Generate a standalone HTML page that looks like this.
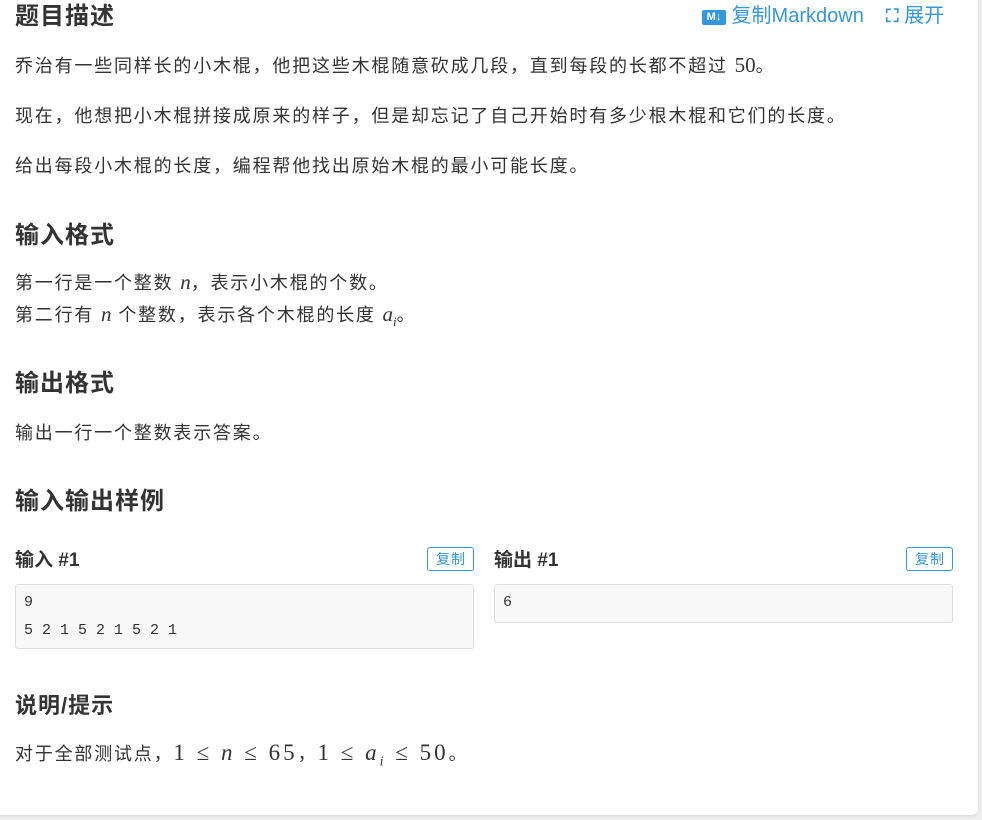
<!DOCTYPE html>
<html><head><meta charset="utf-8"><style>
body{margin:0;width:982px;height:820px;background:#efefef;overflow:hidden;font-family:"Liberation Sans","Noto Sans CJK SC",sans-serif;color:#333}
.card{position:absolute;left:-10px;top:-10px;width:988px;height:825px;background:#fff;border-radius:6px;box-shadow:0 1px 3px rgba(0,0,0,.1)}
h2{position:absolute;margin:0;font-size:24px;letter-spacing:1px;font-weight:bold;left:15px;line-height:30px;color:#333}
p{position:absolute;margin:0;left:15px;font-size:18px;letter-spacing:1.8px;line-height:24px;white-space:nowrap}
.m{font-family:"Liberation Serif",serif;font-size:21px;letter-spacing:0}
.i{font-style:italic}
h3{position:absolute;margin:0;font-size:19px;font-weight:bold;line-height:24px}
.btn{position:absolute;border:1px solid #3498db;color:#3498db;border-radius:3px;font-size:14px;line-height:22px;padding:0 7px 0 8px;background:#fff;letter-spacing:1px}
.box{position:absolute;background:#f8f8f8;border:1px solid #ddd;border-radius:3px;font-family:"Liberation Mono","DejaVu Sans Mono",monospace;font-size:15px;line-height:28px;padding:4px 8px;box-sizing:border-box}
.lk{position:absolute;color:#3498db;font-size:20px;line-height:24px;top:4px;white-space:nowrap}
</style></head><body>
<div class="card"></div>
<h2 style="top:2px">题目描述</h2>
<div class="lk" style="left:702px"><span style="display:inline-block;width:24px;height:15px;background:#3498db;border-radius:2px;color:#fff;font-size:11px;line-height:15px;text-align:center;vertical-align:2px;font-weight:bold">M↓</span> 复制Markdown</div>
<div class="lk" style="left:886px"><span style="font-weight:bold;font-size:18px">⛶</span> 展开</div>
<p style="top:53px">乔治有一些同样长的小木棍，他把这些木棍随意砍成几段，直到每段的长都不超过 <span class="m">50</span>。</p>
<p style="top:104px">现在，他想把小木棍拼接成原来的样子，但是却忘记了自己开始时有多少根木棍和它们的长度。</p>
<p style="top:154px">给出每段小木棍的长度，编程帮他找出原始木棍的最小可能长度。</p>
<h2 style="top:221px">输入格式</h2>
<p style="top:270px">第一行是一个整数 <span class="m i">n</span>，表示小木棍的个数。</p>
<p style="top:302px">第二行有 <span class="m i">n</span> 个整数，表示各个木棍的长度 <span class="m i">a<sub style="font-size:13px">i</sub></span>。</p>
<h2 style="top:369px">输出格式</h2>
<p style="top:421px">输出一行一个整数表示答案。</p>
<h2 style="top:487px">输入输出样例</h2>
<h3 style="left:15px;top:549px">输入 #1</h3>
<div class="btn" style="left:427px;top:547px">复制</div>
<div class="box" style="left:15px;top:584px;width:459px;height:65px">9<br>5 2 1 5 2 1 5 2 1</div>
<h3 style="left:494px;top:549px">输出 #1</h3>
<div class="btn" style="left:906px;top:547px">复制</div>
<div class="box" style="left:494px;top:584px;width:459px;height:39px">6</div>
<h2 style="top:691px;font-size:22px">说明/提示</h2>
<p style="top:741px">对于全部测试点，<span class="m" style="letter-spacing:3px;font-size:23px">1 ≤ <span class="i">n</span> ≤ 65</span>，<span class="m" style="letter-spacing:3px;font-size:23px">1 ≤ <span class="i">a<sub style="font-size:14px">i</sub></span> ≤ 50</span>。</p>
</body></html>
